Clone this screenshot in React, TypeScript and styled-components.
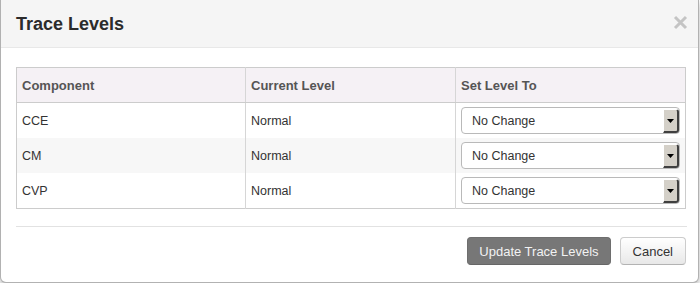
import React from 'react';
import styled, { createGlobalStyle } from 'styled-components';

const GlobalStyle = createGlobalStyle`
  html, body {
    margin: 0;
    padding: 0;
    background: #ffffff;
    font-family: "Liberation Sans", Arial, sans-serif;
    color: #333333;
  }
`;

const Modal = styled.div`
  width: 697px;
  background: #ffffff;
  border: 1px solid rgba(0, 0, 0, 0.3);
  border-top: none;
  border-radius: 0 0 6px 6px;
  box-shadow: 0 3px 7px rgba(0, 0, 0, 0.3);
  overflow: hidden;
`;

const Header = styled.div`
  height: 47px;
  padding: 0 10px 0 15px;
  display: flex;
  align-items: center;
  justify-content: space-between;
  background: #f5f5f5;
  border-bottom: 1px solid #e8e8e8;
`;

const Title = styled.h3`
  margin: 0;
  font-size: 18px;
  line-height: 18px;
  font-weight: bold;
  color: #2b2b2b;
`;

const Close = styled.button`
  border: none;
  background: transparent;
  padding: 0;
  width: 15px;
  height: 15px;
  margin-top: -2px;
  display: flex;
  cursor: pointer;
`;

const Body = styled.div`
  padding: 19px 11px 17px 15px;
`;

const Table = styled.table`
  width: 670px;
  box-sizing: border-box;
  border-collapse: collapse;
  table-layout: fixed;
  border: 1px solid #cccccc;
`;

const HeadCell = styled.th<{ $w: number }>`
  width: ${p => p.$w}px;
  height: 34px;
  padding: 0 5px;
  text-align: left;
  font-size: 13px;
  font-weight: bold;
  color: #555555;
  background: #f5f1f5;
  border-bottom: 1px solid #cccccc;
  border-left: 1px solid #d6d6d6;
  &:first-child {
    border-left: none;
  }
`;

const Row = styled.tr<{ $alt: boolean }>`
  background: ${p => (p.$alt ? '#f7f7f7' : '#ffffff')};
`;

const Cell = styled.td`
  height: 35px;
  padding: 0 5px;
  font-size: 12.5px;
  color: #333333;
  border-left: 1px solid #d6d6d6;
  &:first-child {
    border-left: none;
  }
`;

const SelectBox = styled.div`
  width: 219px;
  height: 27px;
  box-sizing: border-box;
  display: flex;
  align-items: stretch;
  border: 1px solid #b9b9b9;
  border-radius: 4px;
  background: #ffffff;
`;

const SelectText = styled.span`
  flex: 1;
  display: flex;
  align-items: center;
  padding-left: 10px;
  font-size: 12.5px;
  color: #333333;
`;

const ArrowButton = styled.span`
  width: 16px;
  margin: 1px 0 0 0;
  box-sizing: border-box;
  display: flex;
  align-items: center;
  justify-content: center;
  background: #d4d0c8;
  border-top: 1px solid #ffffff;
  border-left: 1px solid #ffffff;
  border-right: 2px solid #404040;
  border-bottom: 2px solid #404040;
  border-radius: 0 3px 3px 0;
`;

const Divider = styled.hr`
  margin: 0 11px 0 15px;
  border: none;
  border-top: 1px solid #e2e2e2;
`;

const Footer = styled.div`
  display: flex;
  justify-content: flex-end;
  gap: 9px;
  padding: 10px 12px 17px 15px;
`;

const Button = styled.button<{ $primary?: boolean }>`
  height: 28px;
  padding: 0 ${p => (p.$primary ? 11 : 12)}px;
  font-family: "Liberation Sans", Arial, sans-serif;
  font-size: 13px;
  border-radius: 4px;
  cursor: pointer;
  color: ${p => (p.$primary ? '#f2f2f2' : '#333333')};
  background: ${p =>
    p.$primary ? '#777777' : 'linear-gradient(#ffffff, #e8e8e8)'};
  border: 1px solid ${p => (p.$primary ? '#6e6e6e' : '#cccccc')};
  border-bottom-color: ${p => (p.$primary ? '#666666' : '#b3b3b3')};
`;

const rows = [
  { name: 'CCE', level: 'Normal' },
  { name: 'CM', level: 'Normal' },
  { name: 'CVP', level: 'Normal' },
];

const App: React.FC = () => (
  <>
    <GlobalStyle />
    <Modal>
      <Header>
        <Title>Trace Levels</Title>
        <Close aria-label="Close">
          <svg width="15" height="15" viewBox="0 0 15 15">
            <path d="M2 2 L13 13 M13 2 L2 13" stroke="#c4c4c4" strokeWidth="3" />
          </svg>
        </Close>
      </Header>
      <Body>
        <Table>
          <thead>
            <tr>
              <HeadCell $w={218}>Component</HeadCell>
              <HeadCell $w={199}>Current Level</HeadCell>
              <HeadCell $w={219}>Set Level To</HeadCell>
            </tr>
          </thead>
          <tbody>
            {rows.map((r, i) => (
              <Row key={r.name} $alt={i % 2 === 1}>
                <Cell>{r.name}</Cell>
                <Cell>{r.level}</Cell>
                <Cell>
                  <SelectBox>
                    <SelectText>No Change</SelectText>
                    <ArrowButton>
                      <svg width="7" height="4" viewBox="0 0 7 4">
                        <path d="M0 0 H7 L3.5 4 Z" fill="#000" />
                      </svg>
                    </ArrowButton>
                  </SelectBox>
                </Cell>
              </Row>
            ))}
          </tbody>
        </Table>
      </Body>
      <Divider />
      <Footer>
        <Button $primary>Update Trace Levels</Button>
        <Button>Cancel</Button>
      </Footer>
    </Modal>
  </>
);

export default App;
